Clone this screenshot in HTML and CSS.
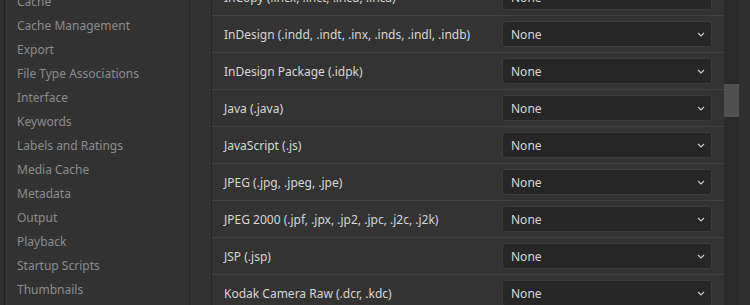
FILE: index.html
```html
<!DOCTYPE html>
<html>
<head>
<meta charset="utf-8">
<link rel="stylesheet" href="styles.css">
</head>
<body>
<div class="app">
  <div class="edge"></div>
  <nav class="sidebar">
    <ul class="nav-list">
      <li>Cache</li>
      <li>Cache Management</li>
      <li>Export</li>
      <li>File Type Associations</li>
      <li>Interface</li>
      <li>Keywords</li>
      <li>Labels and Ratings</li>
      <li>Media Cache</li>
      <li>Metadata</li>
      <li>Output</li>
      <li>Playback</li>
      <li>Startup Scripts</li>
      <li>Thumbnails</li>
    </ul>
  </nav>
  <div class="gap"></div>
  <main class="content">
    <div class="rows">
      <div class="row"><span class="label">InCopy (.incx, .inct, .incd, .inca)</span><div class="select"><span>None</span><svg class="chev" width="8" height="5" viewBox="0 0 8 5"><path d="M1 1 L4 4 L7 1" fill="none" stroke="#c8c8c8" stroke-width="1.2"/></svg></div></div>
      <div class="row"><span class="label">InDesign (.indd, .indt, .inx, .inds, .indl, .indb)</span><div class="select"><span>None</span><svg class="chev" width="8" height="5" viewBox="0 0 8 5"><path d="M1 1 L4 4 L7 1" fill="none" stroke="#c8c8c8" stroke-width="1.2"/></svg></div></div>
      <div class="row"><span class="label">InDesign Package (.idpk)</span><div class="select"><span>None</span><svg class="chev" width="8" height="5" viewBox="0 0 8 5"><path d="M1 1 L4 4 L7 1" fill="none" stroke="#c8c8c8" stroke-width="1.2"/></svg></div></div>
      <div class="row"><span class="label">Java (.java)</span><div class="select"><span>None</span><svg class="chev" width="8" height="5" viewBox="0 0 8 5"><path d="M1 1 L4 4 L7 1" fill="none" stroke="#c8c8c8" stroke-width="1.2"/></svg></div></div>
      <div class="row"><span class="label">JavaScript (.js)</span><div class="select"><span>None</span><svg class="chev" width="8" height="5" viewBox="0 0 8 5"><path d="M1 1 L4 4 L7 1" fill="none" stroke="#c8c8c8" stroke-width="1.2"/></svg></div></div>
      <div class="row"><span class="label">JPEG (.jpg, .jpeg, .jpe)</span><div class="select"><span>None</span><svg class="chev" width="8" height="5" viewBox="0 0 8 5"><path d="M1 1 L4 4 L7 1" fill="none" stroke="#c8c8c8" stroke-width="1.2"/></svg></div></div>
      <div class="row"><span class="label">JPEG 2000 (.jpf, .jpx, .jp2, .jpc, .j2c, .j2k)</span><div class="select"><span>None</span><svg class="chev" width="8" height="5" viewBox="0 0 8 5"><path d="M1 1 L4 4 L7 1" fill="none" stroke="#c8c8c8" stroke-width="1.2"/></svg></div></div>
      <div class="row"><span class="label">JSP (.jsp)</span><div class="select"><span>None</span><svg class="chev" width="8" height="5" viewBox="0 0 8 5"><path d="M1 1 L4 4 L7 1" fill="none" stroke="#c8c8c8" stroke-width="1.2"/></svg></div></div>
      <div class="row"><span class="label">Kodak Camera Raw (.dcr, .kdc)</span><div class="select"><span>None</span><svg class="chev" width="8" height="5" viewBox="0 0 8 5"><path d="M1 1 L4 4 L7 1" fill="none" stroke="#c8c8c8" stroke-width="1.2"/></svg></div></div>
    </div>
  </main>
  <div class="track"><div class="thumb"></div></div>
  <div class="rim"></div>
</div>
</body>
</html>
```
FILE: styles.css
```css
html, body {
  margin: 0;
  padding: 0;
}
body {
  width: 750px;
  height: 305px;
  overflow: hidden;
  background: #323232;
  font-family: "Noto Sans", "Open Sans", sans-serif;
  font-size: 12px;
}
.app {
  display: flex;
  height: 305px;
  overflow: hidden;
}
.edge {
  width: 4px;
  flex: none;
  background: #2f2f2f;
  border-right: 1px solid #202020;
}
.sidebar {
  width: 184px;
  flex: none;
  background: #323232;
  border-right: 1px solid #262626;
  overflow: hidden;
}
.nav-list {
  list-style: none;
  margin: -10px 0 0 0;
  padding: 0 0 0 12px;
}
.nav-list li {
  height: 24px;
  line-height: 24px;
  color: #8c8c8c;
  white-space: nowrap;
}
.gap {
  width: 21px;
  flex: none;
  background: #323232;
  border-right: 1px solid #262626;
}
.content {
  width: 512px;
  flex: none;
  background: #333333;
  overflow: hidden;
}
.rows {
  margin-top: -21px;
}
.row {
  display: flex;
  align-items: center;
  height: 36px;
  border-bottom: 1px solid #414141;
  padding: 0 12px;
}
.label {
  flex: 1;
  color: #d6d6d6;
  white-space: nowrap;
}
.select {
  width: 208px;
  height: 24px;
  flex: none;
  display: flex;
  align-items: center;
  justify-content: space-between;
  background: #262626;
  border: 1px solid #3b3b3b;
  border-radius: 3px;
  padding: 0 6px 0 8px;
  box-sizing: content-box;
  width: 194px;
  color: #d6d6d6;
}
.chev {
  display: block;
}
.track {
  width: 15px;
  flex: none;
  background: #2a2a2a;
}
.thumb {
  margin-top: 84px;
  height: 33px;
  background: #505050;
}
.rim {
  width: 11px;
  flex: none;
  background: #2f2f2f;
}
```
